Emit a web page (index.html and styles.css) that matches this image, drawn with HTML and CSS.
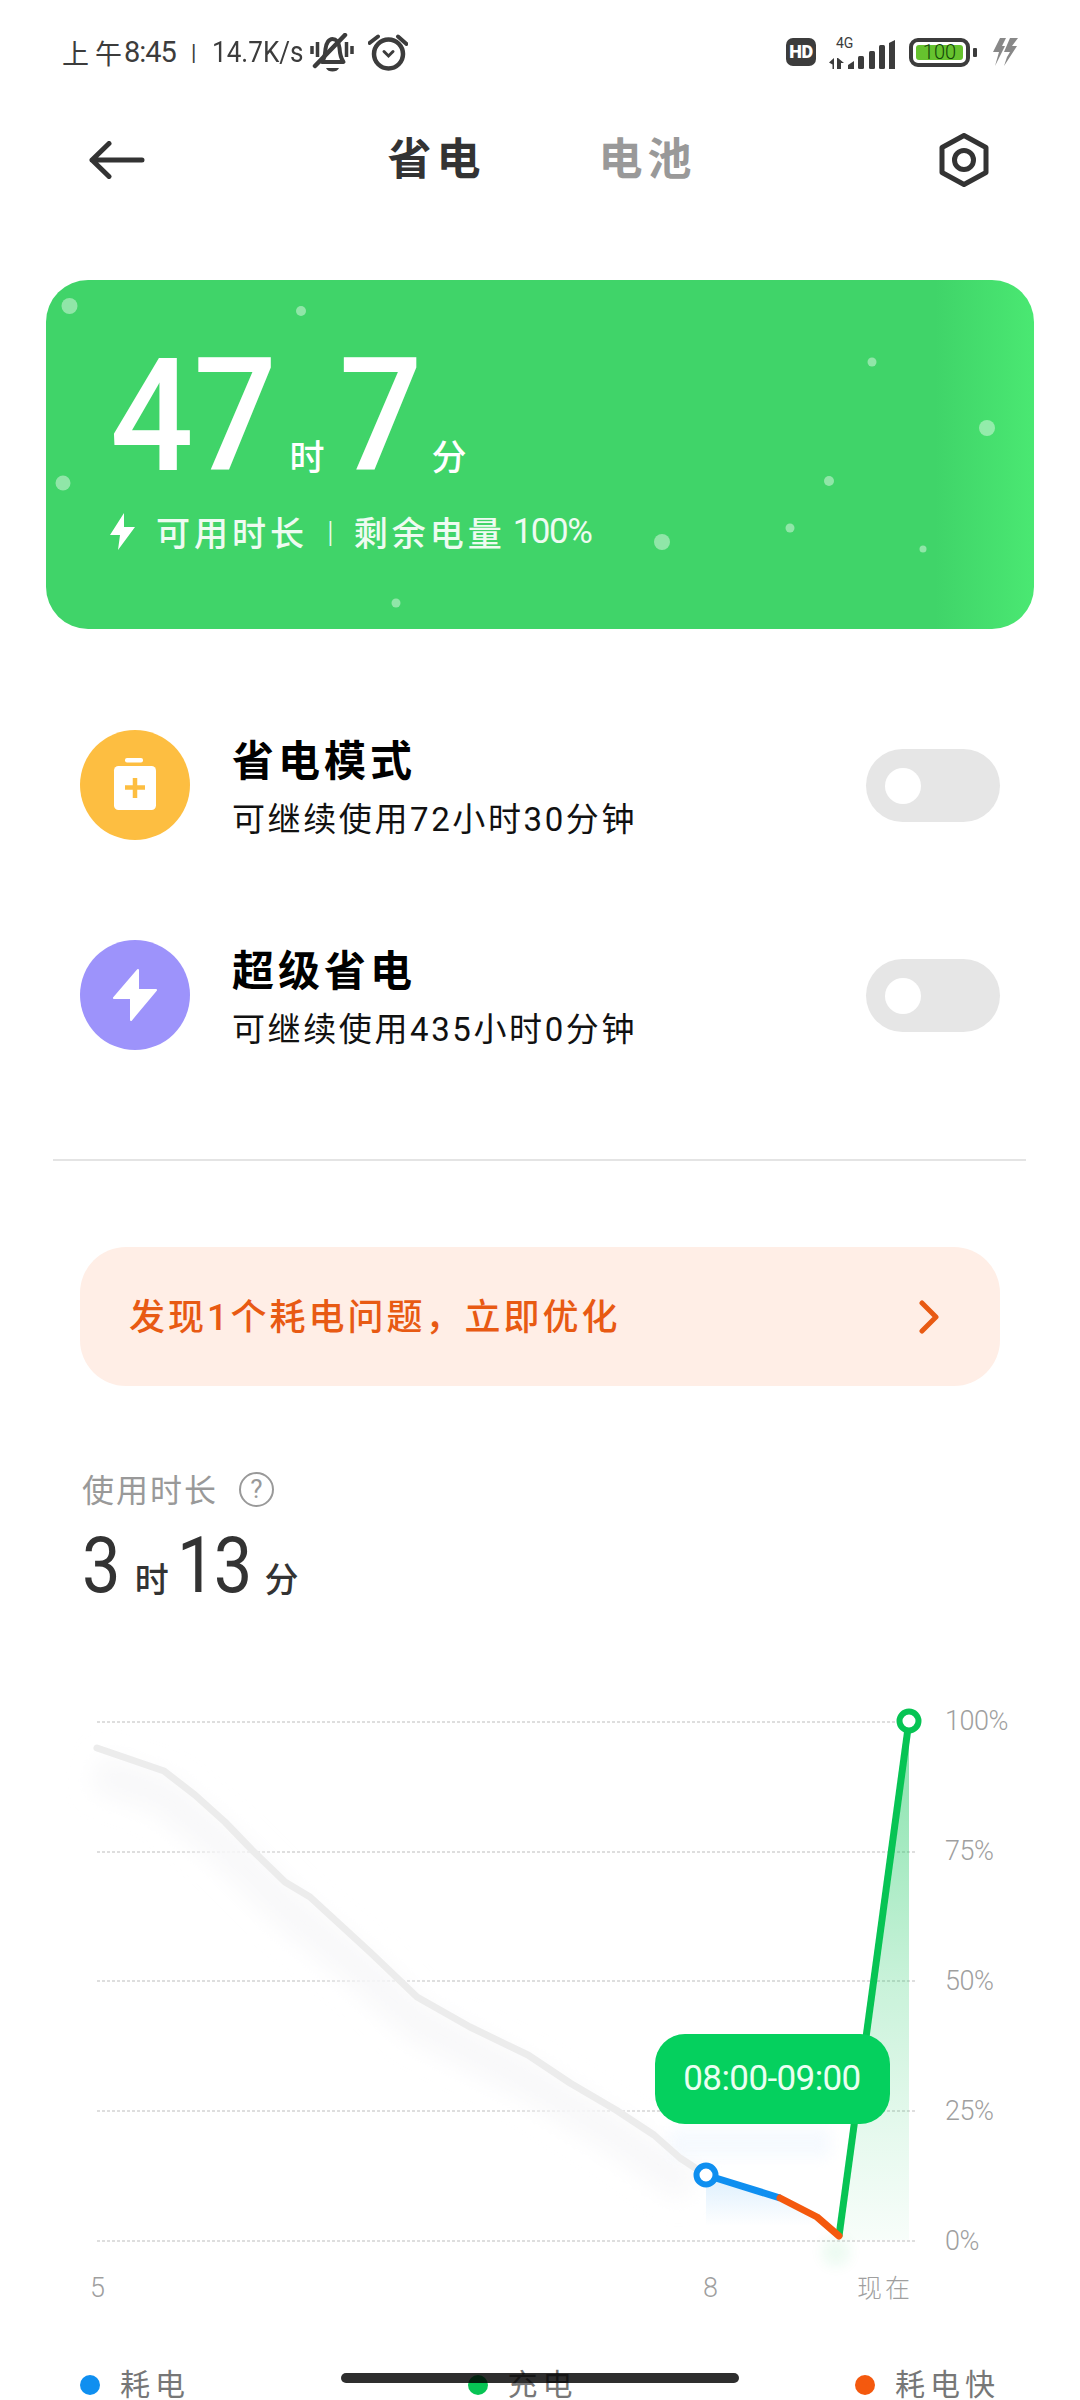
FILE: index.html
```html
<!DOCTYPE html>
<html lang="zh-CN">
<head>
<meta charset="utf-8">
<title>省电与电池</title>
<link rel="stylesheet" href="styles.css">
</head>
<body>
<div class="page">

  <header class="status">
    <div class="status-group">
      <span class="st-ampm">上午</span>
      <span class="st-time">8:45</span>
      <span class="st-sep">|</span>
      <span class="st-speed">14.7K/s</span>
      <svg class="st-bell" width="44" height="39" viewBox="0 0 44 39" fill="none" stroke="#3c3c3c">
        <path d="M2 13v8M7.500 9v15M36.500 9v15M42 13v8" stroke-width="3.500"/>
        <path d="M12 29c3-4 3-8 3.500-13 .6-6 3.500-10 7-10s6.500 3 7 9c.4 6 1 10 4 14z" stroke-width="4" stroke-linejoin="round"/>
        <path d="M5 33 35 2" stroke-width="4.500" stroke-linecap="round"/>
        <path d="M16 35h13c-1 2.500-3.500 3.500-6.500 3.500S17 37.500 16 35z" fill="#3c3c3c" stroke="none"/>
      </svg>
      <svg class="st-alarm" width="40" height="37" viewBox="0 0 40 37" fill="none" stroke="#3c3c3c" stroke-linecap="round">
        <circle cx="20.500" cy="20" r="14.500" stroke-width="4.500"/>
        <path d="M1.500 9 10 2.500M30 2.500 38.500 10" stroke-width="4"/>
        <path d="M16 17.500l4.500 4.500 4.500-4.500" stroke-width="3"/>
      </svg>
    </div>
    <div class="status-group">
      <span class="st-hd">HD</span>
      <svg class="st-signal" width="66" height="33" viewBox="0 0 66 33" fill="#3c3c3c">
        <text class="st-net" x="7" y="12">4G</text>
        <path d="M0 26.500 5 22v11H3.500v-4.500zM8 22l1 0 6 5h-3v6H8z"/>
        <path d="M19 29l6-4v8h-6z"/>
        <rect x="29" y="20" width="6" height="13" rx="1.500"/>
        <rect x="40" y="15" width="6" height="18" rx="1.500"/>
        <rect x="50" y="9" width="6" height="24" rx="1.500"/>
        <path d="M60 7l6-3v29h-6z"/>
      </svg>
      <div class="st-battery">
        <span class="st-level">100</span>
      </div>
      <span class="st-cap"></span>
      <svg class="st-charge" width="25" height="28" viewBox="0 0 25 28" fill="#888888">
        <path d="M7 0h6L9 8h3L2 28l4-14H0z"/>
        <path d="M17 0h8l-6 8h5L11 28l3-9 3-5h-6z"/>
      </svg>
    </div>
  </header>

  <nav class="nav">
    <svg class="nav-back" width="56" height="38" viewBox="0 0 56 38" fill="none" stroke="#333333" stroke-width="5" stroke-linecap="round" stroke-linejoin="round">
      <path d="M20 2.500 3 19l17 16.500M3 19h50"/>
    </svg>
    <div class="tabs">
      <span class="tab tab-active">省电</span>
      <span class="tab">电池</span>
    </div>
    <svg class="nav-gear" width="50" height="54" viewBox="0 0 50 54" fill="none" stroke="#333333" stroke-linejoin="round">
      <path d="M25 2.500 47 14.500v25L25 51.500 3 39.500v-25z" stroke-width="5"/>
      <circle cx="25" cy="27" r="9.500" stroke-width="5"/>
    </svg>
  </nav>

  <section class="hero">
    <svg class="hero-dots" width="988" height="349" viewBox="46 280 988 349" fill="#ffffff" fill-opacity="0.42">
      <circle cx="69.500" cy="306" r="8"/>
      <circle cx="301" cy="311" r="5"/>
      <circle cx="63" cy="483" r="7.500"/>
      <circle cx="396" cy="603" r="4.500"/>
      <circle cx="872" cy="362" r="4.500"/>
      <circle cx="987" cy="428" r="8"/>
      <circle cx="829" cy="481" r="5"/>
      <circle cx="790" cy="528" r="4.500"/>
      <circle cx="662" cy="542" r="8"/>
      <circle cx="923" cy="549" r="3.500"/>
    </svg>
    <div class="hero-time">
      <span class="hero-num">47</span><span class="hero-unit hero-unit-h">时</span><span class="hero-num">7</span><span class="hero-unit hero-unit-m">分</span>
    </div>
    <div class="hero-sub">
      <svg class="hero-bolt" width="25" height="37" viewBox="0 0 25 37" fill="#ffffff">
        <path d="M14 0 0 22h10L8 37l17-23H14z"/>
      </svg>
      <span class="hero-label">可用时长</span>
      <span class="hero-sep">|</span>
      <span class="hero-label">剩余电量</span>
      <span class="hero-level">100%</span>
    </div>
  </section>

  <section class="modes">
    <div class="mode">
      <span class="mode-icon mode-icon-save">
        <svg width="44" height="54" viewBox="0 0 44 54">
          <rect x="12" y="0" width="18" height="4.500" rx="2" fill="#ffffff"/>
          <rect x="1" y="8" width="42" height="44" rx="4.500" fill="#ffffff"/>
          <path d="M22 20v20M12 29.500h20" stroke="#fdbe41" stroke-width="4.500" fill="none"/>
        </svg>
      </span>
      <div class="mode-text">
        <div class="mode-title">省电模式</div>
        <div class="mode-desc">可继续使用72小时30分钟</div>
      </div>
      <span class="toggle"><span class="toggle-knob"></span></span>
    </div>
    <div class="mode">
      <span class="mode-icon mode-icon-super">
        <svg width="46" height="54" viewBox="0 0 46 54">
          <path d="M26 2 2 30h17v22L44 22H26z" fill="#ffffff" stroke="#ffffff" stroke-width="2" stroke-linejoin="round"/>
        </svg>
      </span>
      <div class="mode-text">
        <div class="mode-title">超级省电</div>
        <div class="mode-desc">可继续使用435小时0分钟</div>
      </div>
      <span class="toggle"><span class="toggle-knob"></span></span>
    </div>
  </section>

  <hr class="divider">

  <a class="banner">
    <span class="banner-text">发现1个耗电问题，立即优化</span>
    <svg width="20" height="34" viewBox="0 0 20 34" fill="none" stroke="#e85a13" stroke-width="5" stroke-linecap="round" stroke-linejoin="round">
      <path d="M3 3 17 17 3 31"/>
    </svg>
  </a>

  <section class="usage">
    <div class="usage-head">
      <span class="usage-label">使用时长</span>
      <span class="help">?</span>
    </div>
    <div class="usage-value">
      <span class="usage-num">3</span><span class="usage-unit usage-unit-h">时</span><span class="usage-num usage-num-wide">13</span><span class="usage-unit usage-unit-m">分</span>
    </div>
  </section>

  <svg class="chart" width="1080" height="640" viewBox="0 1700 1080 640" fill="none">
    <defs>
      <linearGradient id="chargeFill" x1="0" y1="1721" x2="0" y2="2240" gradientUnits="userSpaceOnUse">
        <stop offset="0" stop-color="#07c454" stop-opacity="0.5"/>
        <stop offset="0.5" stop-color="#07c454" stop-opacity="0.22"/>
        <stop offset="0.8" stop-color="#07c454" stop-opacity="0.1"/>
        <stop offset="1" stop-color="#07c454" stop-opacity="0.03"/>
      </linearGradient>
      <linearGradient id="drainFill" x1="0" y1="2185" x2="0" y2="2226" gradientUnits="userSpaceOnUse">
        <stop offset="0" stop-color="#0f8ff0" stop-opacity="0.12"/>
        <stop offset="1" stop-color="#0f8ff0" stop-opacity="0"/>
      </linearGradient>
      <filter id="soft" x="-20%" y="-20%" width="140%" height="140%">
        <feGaussianBlur stdDeviation="12"/>
      </filter>
      <filter id="softer" x="-40%" y="-60%" width="180%" height="220%">
        <feGaussianBlur stdDeviation="7"/>
      </filter>
    </defs>

    <g class="grid">
      <path d="M97 1722H896M97 1852H915M97 1981H915M97 2111H915M97 2241H915"/>
    </g>

    <path d="M97 1772 164 1795 225 1847 285 1907 371 1978 417 2022 528 2080 616 2135 690 2187" stroke="#f8f8f9" stroke-width="36" filter="url(#soft)"/>
    <rect x="670" y="2128" width="160" height="30" fill="#f0f7fe" opacity="0.6" filter="url(#softer)"/>
    <path d="M706 2175 780 2198 817 2217 839 2236V2240H706z" fill="url(#drainFill)"/>
    <path d="M839 2236 909 1721V2240H839z" fill="url(#chargeFill)"/>
    <ellipse cx="836" cy="2252" rx="14" ry="14" fill="#07c454" opacity="0.08" filter="url(#softer)"/>

    <path d="M97 1748 164 1771 195 1795 225 1822 252 1850 285 1882 310 1897 371 1953 417 1997 470 2027 528 2055 570 2083 616 2110 654 2135 680 2158 706 2175" stroke="#ececec" stroke-width="7" stroke-linejoin="round" stroke-linecap="round"/>
    <path d="M839 2236 909 1721" stroke="#07c454" stroke-width="7"/>
    <path d="M706 2175 780 2198" stroke="#0f8ff0" stroke-width="7"/>
    <path d="M780 2198 817 2217 839 2236" stroke="#f4590e" stroke-width="7" stroke-linecap="round" stroke-linejoin="round"/>
    <circle cx="706" cy="2175" r="9.500" fill="#ffffff" stroke="#0f8ff0" stroke-width="6"/>
    <circle cx="909" cy="1721" r="9.500" fill="#ffffff" stroke="#07c454" stroke-width="6"/>

    <rect x="655" y="2034" width="235" height="90" rx="30" fill="#05d05e"/>
    <text class="chart-tip" x="772" y="2090">08:00-09:00</text>

    <g class="chart-axis">
      <text x="945" y="1730">100%</text>
      <text x="945" y="1860">75%</text>
      <text x="945" y="1990">50%</text>
      <text x="945" y="2120">25%</text>
      <text x="945" y="2250">0%</text>
      <text x="90" y="2297">5</text>
      <text x="703" y="2297">8</text>
      <text class="chart-axis-cjk" x="857" y="2297">现在</text>
    </g>
  </svg>

  <footer class="legend">
    <span class="legend-item"><i class="legend-dot dot-drain"></i>耗电</span>
    <span class="legend-item"><i class="legend-dot dot-charge"></i>充电</span>
    <span class="legend-item"><i class="legend-dot dot-fast"></i>耗电快</span>
  </footer>

  <div class="home-bar"></div>
</div>
</body>
</html>
```
FILE: styles.css
```css
* { box-sizing: border-box; }

html, body {
  margin: 0;
  background: #ffffff;
}

body {
  font-family: Roboto, "Noto Sans CJK SC", sans-serif;
  color: #000000;
}

.page {
  position: relative;
  width: 1080px;
  height: 2400px;
  overflow: hidden;
  display: flex;
  flex-direction: column;
  background: #ffffff;
}

/* status bar */
.status {
  height: 104px;
  padding: 0 62px;
  display: flex;
  justify-content: space-between;
  align-items: center;
  color: #3c3c3c;
  flex: none;
}

.status-group {
  display: flex;
  align-items: center;
}

.st-ampm {
  font-size: 27px;
  letter-spacing: 6px;
  width: 62px;
  white-space: nowrap;
}

.st-time {
  font-size: 29px;
  letter-spacing: -1px;
  width: 67px;
}

.st-sep {
  font-size: 22px;
  width: 21px;
}

.st-speed {
  font-size: 29px;
  width: 98px;
  white-space: nowrap;
  transform: scaleX(0.9);
  transform-origin: left center;
}

.st-alarm { margin-left: 14px; }

.st-hd {
  width: 30px;
  height: 28px;
  border-radius: 7px;
  background: #3c3c3c;
  color: #ffffff;
  font-size: 18px;
  font-weight: 900;
  line-height: 28px;
  text-align: center;
  letter-spacing: -0.5px;
}

.st-signal {
  margin: 0 14px 0 13px;
  overflow: visible;
}

.st-net {
  font-size: 14px;
  fill: #3c3c3c;
}

.st-battery {
  width: 61px;
  height: 29px;
  border: 4px solid #3c3c3c;
  border-radius: 9px;
  padding: 3px;
  display: flex;
}

.st-level {
  flex: 1;
  background: #66c22e;
  border-radius: 3px;
  color: #14470a;
  font-size: 20px;
  line-height: 15px;
  text-align: center;
  font-weight: 300;
}

.st-cap {
  width: 4px;
  height: 9px;
  margin: 0 16px 0 3px;
  background: #3c3c3c;
  border-radius: 1px;
}

/* navigation */
.nav {
  height: 112px;
  padding: 0 91px 0 89px;
  display: flex;
  justify-content: space-between;
  align-items: center;
  flex: none;
}

.tabs {
  display: flex;
  gap: 113px;
}

.tab {
  font-size: 44px;
  line-height: 56px;
  letter-spacing: 5px;
  font-weight: 700;
  color: #999999;
}

.tab-active { color: #333333; }

/* remaining time card */
.hero {
  position: relative;
  flex: none;
  margin: 64px 46px 0;
  height: 349px;
  padding: 57px 0 0 64px;
  border-radius: 42px;
  color: #ffffff;
  background: linear-gradient(90deg, #40d469 0, #40d469 90%, #4ae872 100%);
  overflow: hidden;
}

.hero-dots {
  position: absolute;
  left: 0;
  top: 0;
}

.hero-time {
  position: relative;
  display: flex;
  align-items: baseline;
}

.hero-num {
  font-size: 158px;
  line-height: 158px;
  font-weight: 500;
  transform: scaleX(0.93);
  transform-origin: left center;
}

.hero-unit {
  font-size: 35px;
  line-height: 40px;
  font-weight: 500;
}

.hero-unit-h { margin: 0 14px 0 0; }
.hero-unit-m { margin-left: 3px; }

.hero-sub {
  position: relative;
  margin-top: 16px;
  height: 40px;
  display: flex;
  align-items: center;
  color: #eefbf1;
}

.hero-bolt { margin-right: 21px; }

.hero-label {
  font-size: 34px;
  letter-spacing: 4px;
  font-weight: 500;
}

.hero-sep {
  font-size: 30px;
  margin: 0 20px 0 19px;
  font-weight: 300;
}

.hero-level {
  font-size: 35px;
  font-weight: 400;
  margin-left: 7px;
  letter-spacing: -1.500px;
}

/* power saving modes */
.modes {
  margin-top: 51px;
  flex: none;
}

.mode {
  height: 210px;
  padding: 0 80px;
  display: flex;
  align-items: center;
}

.mode-icon {
  width: 110px;
  height: 110px;
  border-radius: 50%;
  display: flex;
  align-items: center;
  justify-content: center;
  flex: none;
}

.mode-icon-save { background: #fdbe41; }
.mode-icon-super { background: #9d93fb; }

.mode-text {
  flex: 1;
  margin-left: 42px;
  padding-top: 8px;
}

.mode-title {
  font-size: 42px;
  line-height: 48px;
  letter-spacing: 4px;
  font-weight: 700;
}

.mode-desc {
  margin-top: 14px;
  font-size: 33px;
  line-height: 40px;
  letter-spacing: 2.600px;
  color: #111111;
}

.toggle {
  width: 134px;
  height: 73px;
  border-radius: 37px;
  background: #e6e6e6;
  padding: 19px 0 0 19px;
  flex: none;
}

.toggle-knob {
  display: block;
  width: 36px;
  height: 36px;
  border-radius: 50%;
  background: #ffffff;
}

.divider {
  margin: 59px 54px 0 53px;
  height: 2px;
  border: 0;
  background: #e4e4e4;
  flex: none;
}

/* battery problem banner */
.banner {
  margin: 86px 80px 0;
  height: 139px;
  padding: 0 61px 0 49px;
  border-radius: 46px;
  background: #ffeee6;
  display: flex;
  justify-content: space-between;
  align-items: center;
  flex: none;
}

.banner-text {
  font-size: 36px;
  letter-spacing: 3px;
  font-weight: 500;
  color: #e85a13;
  padding-bottom: 6px;
}

/* usage summary */
.usage {
  margin-top: 86px;
  padding-left: 82px;
  flex: none;
}

.usage-head {
  height: 35px;
  display: flex;
  align-items: center;
}

.usage-label {
  font-size: 32px;
  letter-spacing: 2px;
  color: #999999;
  padding-bottom: 4px;
}

.help {
  width: 35px;
  height: 35px;
  margin-left: 21px;
  border: 2.500px solid #999999;
  border-radius: 50%;
  font-size: 26px;
  line-height: 30px;
  text-align: center;
  color: #999999;
}

.usage-value {
  margin-top: 20px;
  display: flex;
  align-items: baseline;
  color: #333333;
}

.usage-num {
  font-size: 78px;
  line-height: 78px;
  transform: scaleX(0.88);
  transform-origin: left center;
}

.usage-num-wide { letter-spacing: -2px; }

.usage-unit {
  font-size: 34px;
  line-height: 40px;
  font-weight: 500;
}

.usage-unit-h { margin: 0 8px 0 9px; }
.usage-unit-m { margin-left: 4px; }

/* battery chart */
.chart {
  margin-top: 95px;
  flex: none;
  display: block;
}

.grid path {
  stroke: #bdbdbd;
  stroke-width: 1;
  stroke-dasharray: 3 2;
}

.chart-tip {
  font-size: 35px;
  letter-spacing: -0.6px;
  fill: #e9fff1;
  text-anchor: middle;
}

.chart-axis text {
  font-size: 27px;
  font-weight: 300;
  fill: #9f9f9f;
  letter-spacing: -0.5px;
}

.chart-axis .chart-axis-cjk {
  font-size: 25px;
  letter-spacing: 3px;
}

/* legend */
.legend {
  margin-top: 30px;
  padding: 0 80px;
  display: flex;
  justify-content: space-between;
  flex: none;
}

.legend-item {
  display: flex;
  align-items: center;
  height: 30px;
  font-size: 30px;
  line-height: 30px;
  letter-spacing: 5px;
  color: #777777;
}

.legend-dot {
  width: 20px;
  height: 20px;
  margin-right: 20px;
  border-radius: 50%;
}

.dot-drain { background: #0f8ff0; }
.dot-charge { background: #07c454; }
.dot-fast { background: #f4590e; }

/* gesture handle, floats over the legend */
.home-bar {
  position: absolute;
  left: 341px;
  top: 2373px;
  width: 398px;
  height: 10px;
  border-radius: 5px;
  background: rgba(0, 0, 0, 0.82);
}
```
